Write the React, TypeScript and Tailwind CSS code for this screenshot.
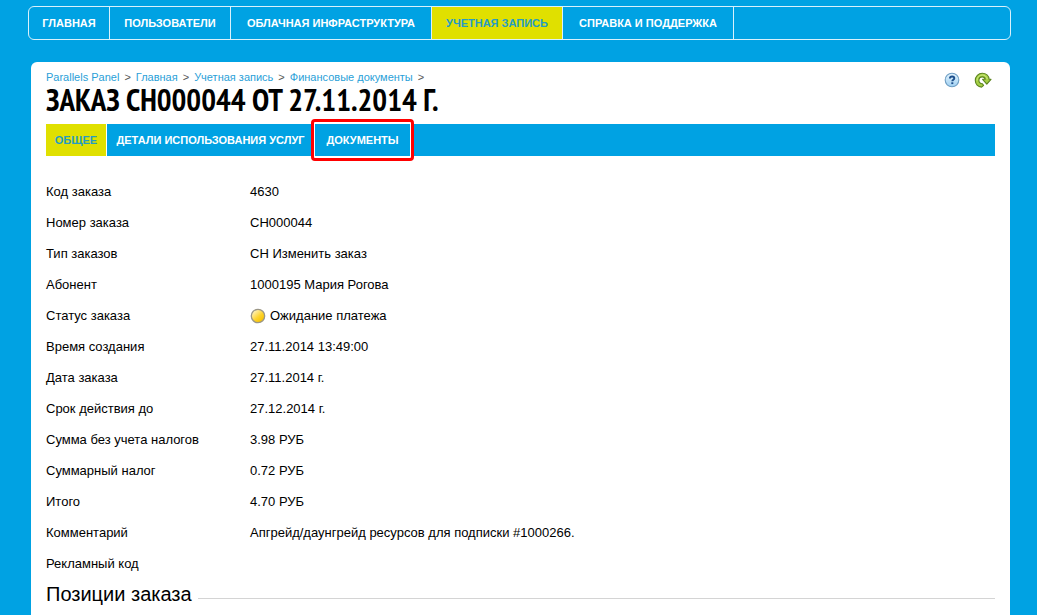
import { clsx } from 'clsx'

const navItems = [
  { label: 'ГЛАВНАЯ', width: 'w-[81px]' },
  { label: 'ПОЛЬЗОВАТЕЛИ', width: 'w-[121px]' },
  { label: 'ОБЛАЧНАЯ ИНФРАСТРУКТУРА', width: 'w-[201px]' },
  { label: 'УЧЕТНАЯ ЗАПИСЬ', width: 'w-[131px]', active: true },
  { label: 'СПРАВКА И ПОДДЕРЖКА', width: 'w-[171px]' },
]

const breadcrumbs = ['Parallels Panel', 'Главная', 'Учетная запись', 'Финансовые документы']

const orderFields = [
  { label: 'Код заказа', value: '4630' },
  { label: 'Номер заказа', value: 'CH000044' },
  { label: 'Тип заказов', value: 'CH Изменить заказ' },
  { label: 'Абонент', value: '1000195 Мария Рогова' },
  { label: 'Статус заказа', value: 'Ожидание платежа', pending: true },
  { label: 'Время создания', value: '27.11.2014 13:49:00' },
  { label: 'Дата заказа', value: '27.11.2014 г.' },
  { label: 'Срок действия до', value: '27.12.2014 г.' },
  { label: 'Сумма без учета налогов', value: '3.98 РУБ' },
  { label: 'Суммарный налог', value: '0.72 РУБ' },
  { label: 'Итого', value: '4.70 РУБ' },
  { label: 'Комментарий', value: 'Апгрейд/даунгрейд ресурсов для подписки #1000266.' },
  { label: 'Рекламный код', value: '' },
]

function HelpIcon() {
  return (
    <svg width="16" height="16" viewBox="0 0 16 16" fill="none" aria-hidden="true">
      <defs>
        <linearGradient id="help" x1="0" y1="0" x2="0" y2="1">
          <stop offset="0" stopColor="#e3f3fd" />
          <stop offset="1" stopColor="#9fd0f2" />
        </linearGradient>
      </defs>
      <circle cx="8" cy="8" r="6.8" fill="url(#help)" stroke="#6f9fc4" strokeWidth="1.1" />
      <path d="M5.9 6.5C5.9 4.9 7 4.5 8.1 4.5c1.2 0 2.2.6 2.2 1.8 0 1.4-2 1.5-2 3" stroke="#1d4f8c" strokeWidth="1.9" />
      <path d="M7.3 10.3h2v1.8h-2z" fill="#1d4f8c" />
    </svg>
  )
}

function RefreshIcon() {
  return (
    <svg width="18" height="16" viewBox="0 0 18 16" fill="none" aria-hidden="true">
      <path
        d="M7.6 15.1C4 14.9 1.3 12 1.3 8.5 1.3 4.5 4.4 1.3 8.3 1.3c3.800 0 6.500 2.600 6.800 6h1.900l-4.200 4.900-4.200-4.900h2.700C10.900 5.800 9.800 4.900 8.300 4.900c-2 0-3.400 1.500-3.400 3.500 0 1.900 1.300 3 3.300 3.300l1.400 1.700z"
        fill="#a5cf45"
        stroke="#5c8520"
        strokeWidth="1.1"
        strokeLinejoin="round"
      />
      <path d="M3 8.500C3 5.300 5.300 3 8.300 3c2.600 0 4.500 1.600 4.900 4" stroke="#cdea80" strokeWidth="1" />
    </svg>
  )
}

function StatusIcon() {
  return (
    <svg width="16" height="16" viewBox="0 0 16 16" aria-hidden="true">
      <defs>
        <linearGradient id="pending" x1="0.1" y1="0.1" x2="0.8" y2="0.9">
          <stop offset="0" stopColor="#fff6cf" />
          <stop offset="0.6" stopColor="#fdd32b" />
          <stop offset="1" stopColor="#f7c100" />
        </linearGradient>
      </defs>
      <circle cx="8" cy="8" r="6.7" fill="url(#pending)" stroke="#9a9686" strokeWidth="1.3" />
    </svg>
  )
}

export default function App() {
  return (
    <div className="flex min-h-screen flex-col bg-[#00a2e3] pt-[6px] pr-[26px] pl-7 font-['Liberation_Sans',Arial,sans-serif] text-black">
      {/* Main menu */}
      <nav className="flex h-[34px] overflow-hidden rounded-md border border-[#d9f1fc] text-[11px] font-bold">
        {navItems.map((item) => (
          <a
            key={item.label}
            href="#"
            className={clsx(
              'flex shrink-0 items-center justify-center border-r border-[#d9f1fc] whitespace-nowrap',
              item.width,
              item.active ? 'bg-[#e0e000] text-[#259cc4]' : 'text-white'
            )}
          >
            {item.label}
          </a>
        ))}
      </nav>

      <main className="mt-[22px] mr-px ml-[3px] flex-1 rounded-t-md bg-white px-[15px] pt-2">
        {/* Breadcrumbs and page actions */}
        <div className="flex items-start justify-between">
          <div>
            <div className="flex gap-[5px] text-[11px] leading-[14px] text-[#555]">
              {breadcrumbs.map((crumb) => (
                <span key={crumb} className="flex gap-[5px]">
                  <a href="#" className="text-[#2a9fd8]">
                    {crumb}
                  </a>
                  <span>&gt;</span>
                </span>
              ))}
            </div>
            <h1 className="font-['PT_Sans_Narrow','Liberation_Sans_Narrow','Liberation_Sans',sans-serif] text-[31px] leading-8 font-bold whitespace-nowrap">
              ЗАКАЗ CH000044 ОТ 27.11.2014 Г.
            </h1>
          </div>
          <div className="flex gap-[14px] pt-[2px] pr-[3px]">
            <button type="button" aria-label="Справка">
              <HelpIcon />
            </button>
            <button type="button" aria-label="Обновить">
              <RefreshIcon />
            </button>
          </div>
        </div>

        {/* Tabs */}
        <div className="mt-2 flex h-8 bg-[#00a2e3] text-[11px] font-bold text-white">
          <a href="#" className="flex w-[61px] items-center justify-center border-r border-white bg-[#e0e000] text-[#259cc4]">
            ОБЩЕЕ
          </a>
          <a href="#" className="flex w-[208px] items-center justify-center border-r border-white whitespace-nowrap">
            ДЕТАЛИ ИСПОЛЬЗОВАНИЯ УСЛУГ
          </a>
          <a href="#" className="relative flex w-[96px] items-center justify-center border-r border-white">
            ДОКУМЕНТЫ
            <span className="absolute -inset-x-1 -inset-y-[5px] rounded-sm border-3 border-[#f00]" />
          </a>
        </div>

        {/* Order details */}
        <table className="mt-5 w-full text-left text-[13px]">
          <tbody>
            {orderFields.map((field) => (
              <tr key={field.label} className="h-[31px]">
                <th scope="row" className="w-[204px] font-normal">
                  {field.label}
                </th>
                <td>
                  <div className="flex items-center gap-1">
                    {field.pending && <StatusIcon />}
                    {field.value}
                  </div>
                </td>
              </tr>
            ))}
          </tbody>
        </table>

        {/* Order items */}
        <div className="mt-px flex items-center gap-[6px]">
          <h2 className="text-xl leading-7">Позиции заказа</h2>
          <div className="mt-2 h-px flex-1 bg-[#d4d4d4]" />
        </div>
      </main>
    </div>
  )
}
